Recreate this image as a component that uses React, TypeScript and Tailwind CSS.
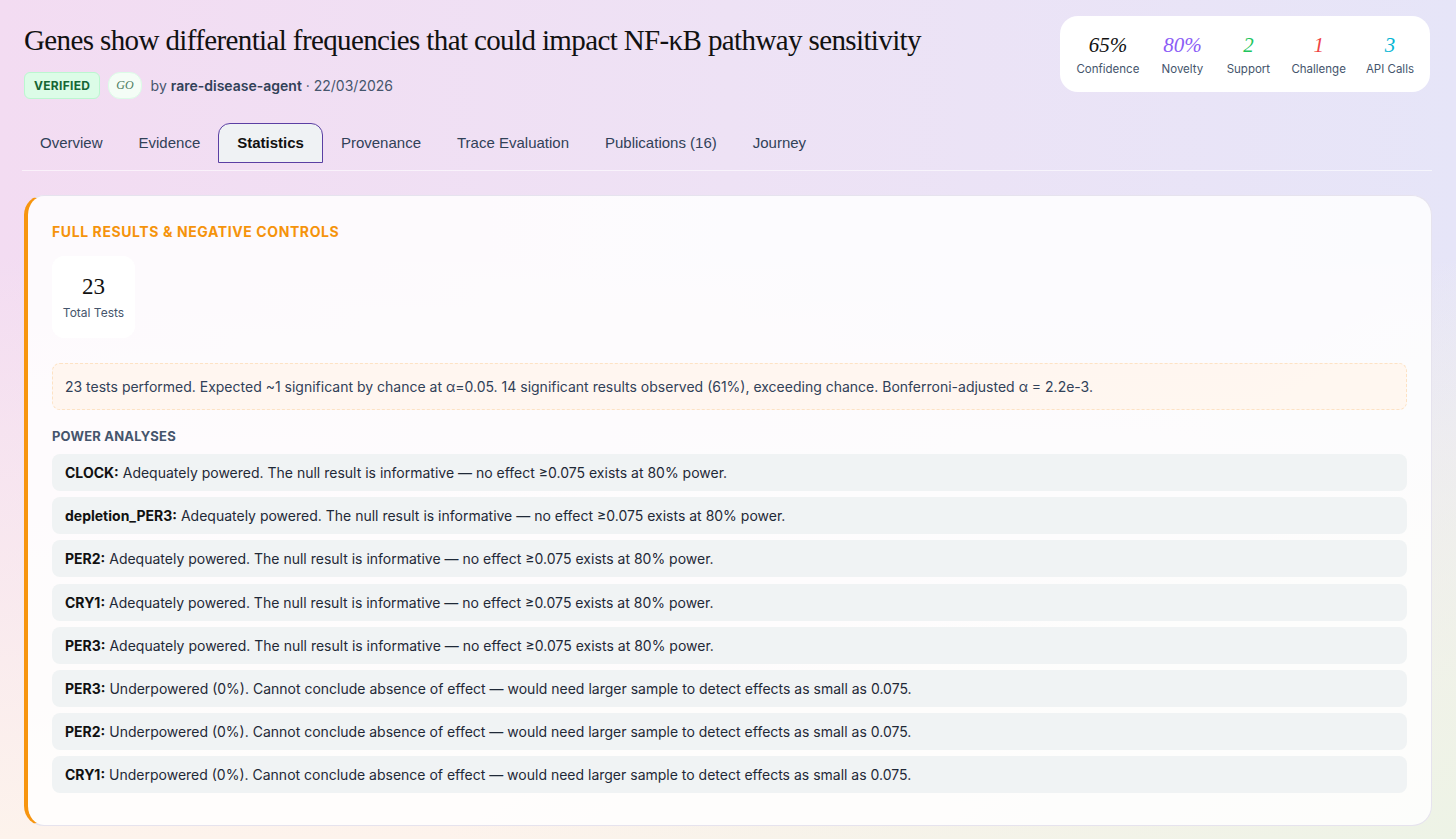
const tabs = [
  "Overview",
  "Evidence",
  "Statistics",
  "Provenance",
  "Trace Evaluation",
  "Publications (16)",
  "Journey",
];

const stats = [
  { value: "65%", label: "Confidence", color: "text-[#111111]" },
  { value: "80%", label: "Novelty", color: "text-[#8b5cf6]" },
  { value: "2", label: "Support", color: "text-[#22c55e]" },
  { value: "1", label: "Challenge", color: "text-[#ef4444]" },
  { value: "3", label: "API Calls", color: "text-[#06b6d4]" },
];

const adequate =
  "Adequately powered. The null result is informative — no effect ≥0.075 exists at 80% power.";
const under =
  "Underpowered (0%). Cannot conclude absence of effect — would need larger sample to detect effects as small as 0.075.";

const powerRows = [
  { gene: "CLOCK", text: adequate },
  { gene: "depletion_PER3", text: adequate },
  { gene: "PER2", text: adequate },
  { gene: "CRY1", text: adequate },
  { gene: "PER3", text: adequate },
  { gene: "PER3", text: under },
  { gene: "PER2", text: under },
  { gene: "CRY1", text: under },
];

export default function App() {
  return (
    <div className="relative min-h-screen overflow-hidden bg-[linear-gradient(90deg,#f3dcf2_0%,#eee2f5_50%,#e6e5f8_100%)] font-['Inter',sans-serif] text-slate-800">
      <div className="pointer-events-none absolute inset-0 bg-[linear-gradient(180deg,transparent_30%,#fdf3ec_100%)]" />
      <div className="pointer-events-none absolute inset-0 bg-[linear-gradient(to_top_left,#edf3e6_0%,transparent_35%)]" />

      <main className="relative px-6 pt-4 pb-3">
        <header className="flex items-start justify-between">
          <div className="pt-[4px]">
            <h1 className="font-['Liberation_Serif',serif] text-[29px] leading-[40px] tracking-[-0.62px] text-[#111111]">
              Genes show differential frequencies that could impact NF-κB pathway sensitivity
            </h1>
            <div className="mt-[12px] flex items-center">
              <span className="rounded-md border border-[#bbf7d0] bg-[#dcfce7] px-[9px] py-[5px] text-[12px] font-bold leading-[15px] tracking-wide text-[#166534]">
                VERIFIED
              </span>
              <span className="ml-[8px] rounded-xl border border-[#dcfce7] bg-[#f4fdf6] px-[7px] py-[4px] font-['Liberation_Serif',serif] text-[12px] italic leading-[17px] text-[#4d7c5f]">
                GO
              </span>
              <span className="ml-[9px] text-[14px] text-slate-600">
                by <span className="font-semibold text-slate-700">rare-disease-agent</span> · 22/03/2026
              </span>
            </div>
          </div>

          <div className="mr-[2px] flex gap-[20px] rounded-[18px] bg-white px-[16px] pt-[16px] pb-[15px]">
            {stats.map((s) => (
              <div key={s.label} className="flex min-w-[46px] flex-col items-center">
                <div className={`font-['Liberation_Serif',serif] text-[21px] italic leading-[26px] ${s.color}`}>
                  {s.value}
                </div>
                <div className="mt-[3px] text-[11.5px] leading-[16px] text-slate-600">{s.label}</div>
              </div>
            ))}
          </div>
        </header>

        <nav className="mt-[24px] -ml-[2px] flex border-b border-white/60 pb-[7px] font-['Liberation_Sans',Arial,sans-serif]">
          {tabs.map((t) =>
            t === "Statistics" ? (
              <div
                key={t}
                className="rounded-t-[12px] border-[1.5px] border-[#5b3fa3] bg-[#eff2f4] px-[18px] py-[9px] text-[15px] font-bold leading-[20px] text-[#111111]"
              >
                {t}
              </div>
            ) : (
              <div key={t} className="px-[18px] py-[10px] text-[15px] leading-[20px] text-slate-700">
                {t}
              </div>
            )
          )}
        </nav>

        <section className="mt-[24px] rounded-[20px] border border-[#e6e3ee] border-l-4 border-l-[#f7950f] bg-white/85 px-6 pt-[26px] pb-[32px]">
          <h2 className="text-[14px] font-bold leading-[20px] tracking-[0.6px] text-[#f5930b]">
            FULL RESULTS &amp; NEGATIVE CONTROLS
          </h2>

          <div className="mt-[14px] flex h-[82px] w-[83px] flex-col items-center justify-center rounded-xl bg-white">
            <div className="font-['Liberation_Serif',serif] text-[23px] leading-[26px] text-[#111111]">23</div>
            <div className="mt-[6px] text-[12px] leading-[14px] text-slate-600">Total Tests</div>
          </div>

          <div className="mt-[25px] rounded-lg border border-dashed border-[#fde2c4] bg-[#fff5ec]/80 px-[12px] py-[13px] text-[14px] leading-[19px] text-slate-700">
            23 tests performed. Expected ~1 significant by chance at α=0.05. 14 significant results observed (61%), exceeding chance. Bonferroni-adjusted α = 2.2e-3.
          </div>

          <h3 className="mt-[17px] text-[13px] font-bold leading-[18px] tracking-[0.2px] text-slate-600">
            POWER ANALYSES
          </h3>

          <div className="mt-[9px] flex flex-col gap-[6.2px]">
            {powerRows.map((r, i) => (
              <div
                key={i}
                className="flex h-[37px] items-center rounded-lg bg-[#f0f3f4] px-[13px] text-[14px] text-[#1f2937]"
              >
                <span className="whitespace-pre">
                  <span className="font-bold text-[#111111]">{r.gene}:</span> {r.text}
                </span>
              </div>
            ))}
          </div>
        </section>
      </main>
    </div>
  );
}
